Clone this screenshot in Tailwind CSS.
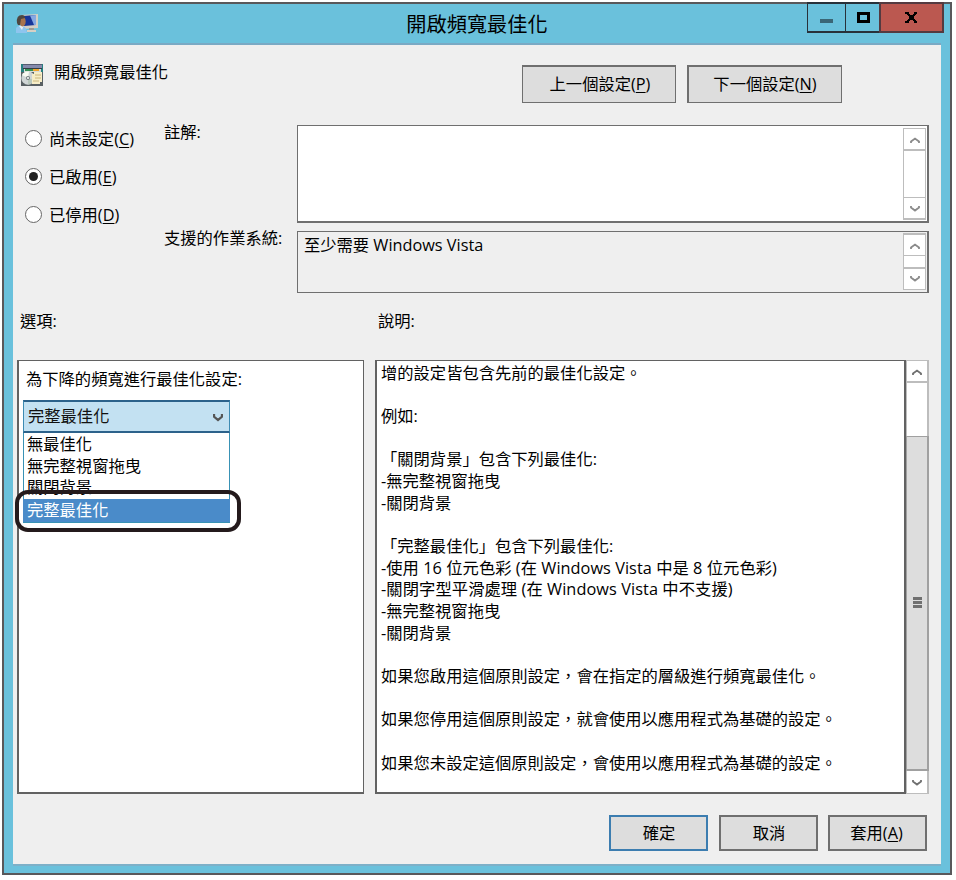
<!DOCTYPE html>
<html lang="zh-Hant">
<head>
<meta charset="utf-8">
<title>開啟頻寬最佳化</title>
<script src="https://cdn.jsdelivr.net/npm/@tailwindcss/browser@4"></script>
</head>
<body class="h-[880px] w-[956px] overflow-hidden bg-white pl-[2px] pt-[2px] font-['Open_Sans','Noto_Sans_CJK_TC',sans-serif] text-[16.3px] leading-[22px] text-black">
<svg class="hidden">
  <symbol id="up" viewBox="0 0 10 7"><path d="M1 6V4.5L5 1.5L9 4.5V6" fill="none" stroke="currentColor" stroke-width="1.8"/></symbol>
  <symbol id="down" viewBox="0 0 10 7"><path d="M1 1V2.5L5 5.5L9 2.5V1" fill="none" stroke="currentColor" stroke-width="1.8"/></symbol>
</svg>
<div class="flex h-[873px] w-[950px] flex-col border-2 border-[#59585b] bg-[#6ac1dc] px-[9px]">
  <header class="relative flex h-[41px] shrink-0 items-center justify-center border-b-2 border-[#7aa9c4]">
    <svg class="absolute left-[3px] top-[9px]" width="22" height="22" viewBox="0 0 22 22">
      <path d="M5 2L22 1V15L7 16Z" fill="#d3cfc5"/>
      <path d="M7 3L20 2V12L8 13Z" fill="#17369a"/>
      <path d="M14 2.500L20 2V12L18 12Z" fill="#86a8e2"/>
      <path d="M13 15H18V17H13Z" fill="#9c9a94"/><path d="M11 17H20V19H11Z" fill="#d6d0c5"/>
      <path d="M0 20V15Q2 12 6 13Q11 14 11 20Z" fill="#8ec5ee"/>
      <path d="M3 13L6 17L8 12Z" fill="#e6eef4"/>
      <ellipse cx="6.500" cy="8.500" rx="3.200" ry="5" fill="#a8744d"/>
      <path d="M1 10Q0 2 6 2Q9 2 9 5L5 6L4 12L2 12Z" fill="#4e4641"/>
    </svg>
    <h1 class="text-[20.2px] leading-[28px]">開啟頻寬最佳化</h1>
    <div class="absolute -right-[3px] -top-[2px] flex h-[31px] w-[137px] border-2 border-l border-[#28313a]">
      <div class="flex w-[38px] justify-center border-r border-[#28313a]"><i class="mt-[15px] h-[4px] w-[13px] bg-[#3a6676]"></i></div>
      <div class="flex w-[35px] justify-center border-r border-[#28313a]"><i class="ml-[1px] mt-[8px] h-[11px] w-[13px] border-[3px] border-black"></i></div>
      <div class="flex flex-1 justify-center bg-[#bb5850] outline-2 outline-[#543a40]">
        <svg class="mt-[8px]" width="13" height="11" viewBox="0 0 13 11"><path d="M0 0H4V2H5V3H8V2H9V0H12V2H11V3H10V4H9V7H10V8H11V9H12V11H9V9H8V8H5V9H4V11H0V9H2V8H3V7H4V4H3V3H2V2H0Z"/></svg>
      </div>
    </div>
  </header>

  <main class="flex h-[819px] shrink-0 flex-col bg-[#efefef]">
    <section class="flex h-[80px] shrink-0 pl-[8px]">
      <svg class="mt-[19px] shrink-0" width="22" height="22" viewBox="0 0 22 22">
        <path d="M0 0H22V22H0Z" fill="#258080"/><path d="M2 1H21V4H2Z" fill="#858aac"/><path d="M2 0H21V1H2Z" fill="#565c70"/>
        <path d="M2 4H21V5H2Z" fill="#343d43"/><path d="M3 5H20V9H3Z" fill="#d9dcd8"/><path d="M4 5H12V7H4Z" fill="#378f55"/><path d="M12 5H18V7H12Z" fill="#efa42d"/>
        <path d="M0 8H22V22H0Z" fill="#596063"/>
        <circle cx="7" cy="14" r="6.700" fill="#d0d5d5"/><path d="M7 14L1 11Q3 7 8 7.500Z" fill="#f9faf2"/><path d="M7 14L13 16Q11 20 7 20.500Z" fill="#b9c8bc"/><circle cx="7" cy="14" r="2" fill="#737b7e"/><circle cx="7" cy="14" r="1" fill="#fff"/>
        <path d="M13 8H21V18H19V20H11V10H13Z" fill="#f7edc7"/><path d="M14 11H20M14 14H20M12 17H18" stroke="#c9b67c"/>
      </svg>
      <span class="ml-[11px] mt-[16px] w-[468px]">開啟頻寬最佳化</span>
      <button class="mt-[20px] h-[38px] w-[154px] shrink-0 border border-t-2 border-[#6f6f6f] bg-[#ddd] pb-[2px] pl-[2px]">上一個設定(<u class="underline-offset-2">P</u>)</button>
      <button class="ml-[11px] mt-[20px] h-[38px] w-[155px] shrink-0 border border-l-2 border-t-2 border-[#6f6f6f] bg-[#ddd] pb-[2px]">下一個設定(<u class="underline-offset-2">N</u>)</button>
    </section>

    <section class="flex h-[168px] shrink-0">
      <div class="flex w-[151px] flex-col gap-[16px] pl-[12px] pt-[3px]">
        <label class="flex items-center gap-[7px]"><i class="-mt-px size-[17px] rounded-full border-[1.5px] border-[#666] bg-white"></i><span>尚未設定(<u class="underline-offset-2">C</u>)</span></label>
        <label class="flex items-center gap-[7px]"><i class="-mt-px flex size-[17px] items-center justify-center rounded-full border-[1.5px] border-[#666] bg-white"><b class="size-[9px] rounded-full bg-[#222]"></b></i><span>已啟用(<u class="underline-offset-2">E</u>)</span></label>
        <label class="flex items-center gap-[7px]"><i class="-mt-px size-[17px] rounded-full border-[1.5px] border-[#666] bg-white"></i><span>已停用(<u class="underline-offset-2">D</u>)</span></label>
      </div>
      <div class="flex w-[133px] flex-col">
        <span class="-mt-[4px]">註解:</span>
        <span class="mt-[84px] whitespace-nowrap">支援的作業系統:</span>
      </div>
      <div class="flex w-[632px] flex-col gap-[8px]">
        <div class="flex h-[98px] justify-end border border-b-2 border-r-2 border-[#6f6f6f] bg-white pr-px pt-[2px]">
          <div class="flex h-[92px] w-[23px] flex-col border border-b-2 border-[#bdbdbd] bg-white text-[#8a8a8a]">
            <div class="flex h-[22px] items-center justify-center border-b-2 border-[#bdbdbd]"><svg class="mt-0.5" width="10" height="7"><use href="#up"/></svg></div>
            <div class="flex-1"></div>
            <div class="flex h-[21px] items-center justify-center border-t border-[#bdbdbd]"><svg width="10" height="7"><use href="#down"/></svg></div>
          </div>
        </div>
        <div class="flex h-[62px] justify-between border border-r-2 border-[#6f6f6f] pl-[6px] pr-px pt-[1px]">
          <span class="mt-[1px]">至少需要 Windows Vista</span>
          <div class="flex h-[57px] w-[23px] flex-col border border-t-2 border-[#bdbdbd] bg-white text-[#8a8a8a]">
            <div class="flex h-[21px] items-center justify-center border-b border-[#bdbdbd]"><svg class="mt-0.5" width="10" height="7"><use href="#up"/></svg></div>
            <div class="flex-1"></div>
            <div class="flex h-[22px] items-center justify-center border-t-2 border-[#bdbdbd]"><svg class="-mt-0.5" width="10" height="7"><use href="#down"/></svg></div>
          </div>
        </div>
      </div>
    </section>

    <div class="flex h-[67px] shrink-0 pl-[7px] pt-[17px]"><span class="w-[358px]">選項:</span><span>說明:</span></div>

    <section class="flex h-[434px] shrink-0 pl-[4px]">
      <div class="w-[347px] border border-b-2 border-l-2 border-[#626262] bg-white pl-[4px] pt-[7px]">
        <div class="pl-[3px]">為下降的頻寬進行最佳化設定:</div>
        <div class="mt-[10px] flex h-[33px] w-[207px] items-center justify-between border-x border-y-2 border-[#2c628b] border-x-[#3d8bb3] bg-[#c3e1f2] pl-[4px] pr-[6px] text-[#111]"><span class="-mt-[2px]">完整最佳化</span><svg class="mt-[3px] text-[#555]" width="10" height="8" viewBox="0 0 10 8"><path d="M1 0V2.500L5 6L9 2.500V0" fill="none" stroke="currentColor" stroke-width="2.300"/></svg></div>
        <div class="relative w-[207px] border border-t-0 border-[#3992b5] pl-[3px] pt-px leading-[21.7px]">
          <div>無最佳化</div><div>無完整視窗拖曳</div><div>關閉背景</div>
          <div class="-ml-[4px] -mr-px h-[23px] bg-[#4a8bc9] pl-[4px] leading-[22px] text-white">完整最佳化</div>
          <div class="absolute -left-[9px] top-[57px] h-[42px] w-[226px] rounded-[13px] border-4 border-[#241a1c]"></div>
        </div>
      </div>
      <div class="ml-[11px] w-[531px] border-2 border-t border-[#626262] bg-white pl-[4px] pt-[1.6px] leading-[21.67px]">
        <p>增的設定皆包含先前的最佳化設定。</p><br>
        <p>例如:</p><br>
        <p>「關閉背景」包含下列最佳化:</p>
        <p>-無完整視窗拖曳</p>
        <p>-關閉背景</p><br>
        <p>「完整最佳化」包含下列最佳化:</p>
        <p class="tracking-[0.05px]">-使用 16 位元色彩 (在 Windows Vista 中是 8 位元色彩)</p>
        <p class="tracking-[0.08px]">-關閉字型平滑處理 (在 Windows Vista 中不支援)</p>
        <p>-無完整視窗拖曳</p>
        <p>-關閉背景</p><br>
        <p>如果您啟用這個原則設定，會在指定的層級進行頻寬最佳化。</p><br>
        <p>如果您停用這個原則設定，就會使用以應用程式為基礎的設定。</p><br>
        <p>如果您未設定這個原則設定，會使用以應用程式為基礎的設定。</p>
      </div>
      <div class="flex w-[23px] flex-col border-y border-l border-r-2 border-[#bdbdbd] bg-white text-[#707070]">
        <div class="flex h-[22px] items-center justify-center border-b-2 border-[#bdbdbd]"><svg class="mt-0.5" width="10" height="7"><use href="#up"/></svg></div>
        <div class="h-[53px]"></div>
        <div class="-ml-px -mr-[2px] flex flex-1 flex-col items-center justify-center gap-px border-b-2 border-l border-r-2 border-t border-[#a0a0a0] bg-[#ddd] pb-[2px]"><i class="h-[3px] w-[9px] bg-[#707070]"></i><i class="h-[3px] w-[9px] bg-[#707070]"></i><i class="h-[3px] w-[9px] bg-[#707070]"></i></div>
        <div class="flex h-[22px] items-center justify-center"><svg width="10" height="7"><use href="#down"/></svg></div>
      </div>
    </section>

    <footer class="flex h-[70px] shrink-0 justify-end gap-[11px] pr-[14px] pt-[21px]">
      <button class="h-[36px] w-[99px] border-2 border-[#3c7db0] bg-[#ddd] pb-px pl-px">確定</button>
      <button class="h-[36px] w-[99px] border-2 border-[#6f6f6f] bg-[#ddd] pb-px pl-px">取消</button>
      <button class="-ml-px h-[36px] w-[99px] border-2 border-[#6f6f6f] bg-[#ddd] pb-px pr-[2px]">套用(<u class="underline-offset-2">A</u>)</button>
    </footer>
  </main>
  <div class="h-[2px] shrink-0 bg-[#7db0c8]"></div>
</div>
</body>
</html>
